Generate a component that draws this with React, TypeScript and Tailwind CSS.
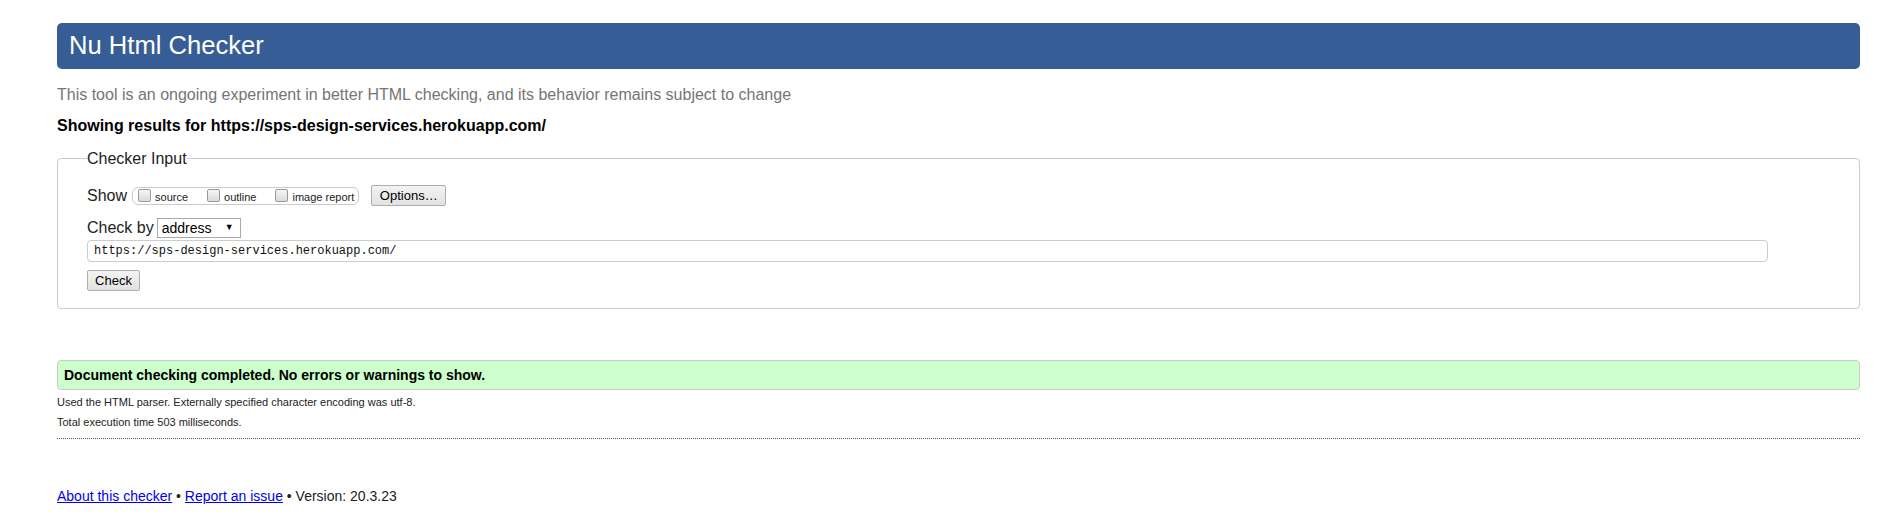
import React from 'react';

const sans = { fontFamily: '"Liberation Sans", Arial, sans-serif' };

const FakeCheckbox = () => (
  <span className="inline-block size-[13px] shrink-0 rounded-[2px] border border-[#9a9a9a] bg-gradient-to-b from-[#f6f6f6] to-[#dadada]" />
);

const ShowOption = ({ label, last }: { label: string; last?: boolean }) => (
  <label className={`flex items-center gap-[4px] ${last ? '' : 'mr-[19px]'}`}>
    <FakeCheckbox />
    <span className="text-[11px] leading-[14px] text-[#222] mt-[3px]">{label}</span>
  </label>
);

const GreyButton = ({ children, className = '' }: { children: React.ReactNode; className?: string }) => (
  <button
    className={`h-[21px] rounded-[2px] border border-[#adadad] bg-gradient-to-b from-[#f3f3f3] to-[#e2e2e2] text-[13px] leading-none text-black ${className}`}
  >
    {children}
  </button>
);

export default function App() {
  return (
    <div className="min-h-[515px] bg-white pt-[23px] pl-[57px] pr-[42px] text-[#222]" style={sans}>
      {/* Header */}
      <h1 className="flex h-[46px] items-center rounded-[5px] bg-[#365d95] pl-[12px] text-[25.6px] font-normal leading-none text-white">
        Nu Html Checker
      </h1>

      <p className="mt-[16px] text-[16px] leading-[20px] text-[#757575]">
        This tool is an ongoing experiment in better HTML checking, and its behavior remains subject to change
      </p>

      <p className="mt-[11px] text-[16px] font-bold leading-[20px] text-black">
        Showing results for https://sps-design-services.herokuapp.com/
      </p>

      {/* Checker input */}
      <fieldset className="mt-[11px] rounded-[4px] border border-[#cccccc] pl-[29px] pr-[16px] pb-[16px]">
        <legend className="px-0 pt-[2px] text-[16px] leading-[20px] text-[#222]">Checker Input</legend>

        <div className="mt-[16px] flex h-[21px] items-center">
          <span className="text-[16px] leading-[20px]">Show</span>
          <div className="ml-[5px] flex h-[18px] items-center rounded-[6px] border border-[#cccccc] pl-[5px] pr-[4px]">
            <ShowOption label="source" />
            <ShowOption label="outline" />
            <ShowOption label="image report" last />
          </div>
          <GreyButton className="ml-[12px] w-[75px]">Options…</GreyButton>
        </div>

        <div className="mt-[11px] flex h-[21px] items-center">
          <span className="text-[16px] leading-[20px]">Check by</span>
          <div className="ml-[3px] flex h-[20px] w-[84px] items-center justify-between border border-[#a9a9a9] bg-white pl-[4px] pr-[6px]">
            <span className="text-[14px] leading-none text-black">address</span>
            <span className="text-[9px] leading-none text-black">▼</span>
          </div>
        </div>

        <div
          className="mt-[2px] flex h-[22px] w-[1681px] items-center rounded-[4px] border border-[#cccccc] pl-[6px] text-[12px] text-[#111]"
          style={{ fontFamily: '"Liberation Mono", "Courier New", monospace' }}
        >
          https://sps-design-services.herokuapp.com/
        </div>

        <GreyButton className="mt-[8px] w-[53px]">Check</GreyButton>
      </fieldset>

      {/* Result */}
      <div className="mt-[51px] flex h-[30px] items-center rounded-[4px] border border-[#cccccc] bg-[#ccffcc] pl-[6px] text-[14px] font-bold text-black">
        Document checking completed. No errors or warnings to show.
      </div>

      <p className="mt-[4px] text-[11px] leading-[16px] text-[#222]">
        Used the HTML parser. Externally specified character encoding was utf-8.
      </p>
      <p className="mt-[4px] text-[11px] leading-[16px] text-[#222]">Total execution time 503 milliseconds.</p>

      <div className="mt-[8px] border-b border-dotted border-[#555]" />

      <p className="mt-[48px] text-[14px] leading-[18px] text-[#222]">
        <a href="#" className="text-[#0000ee] underline">About this checker</a>
        {' • '}
        <a href="#" className="text-[#0000ee] underline">Report an issue</a>
        {' • Version: 20.3.23'}
      </p>
    </div>
  );
}
